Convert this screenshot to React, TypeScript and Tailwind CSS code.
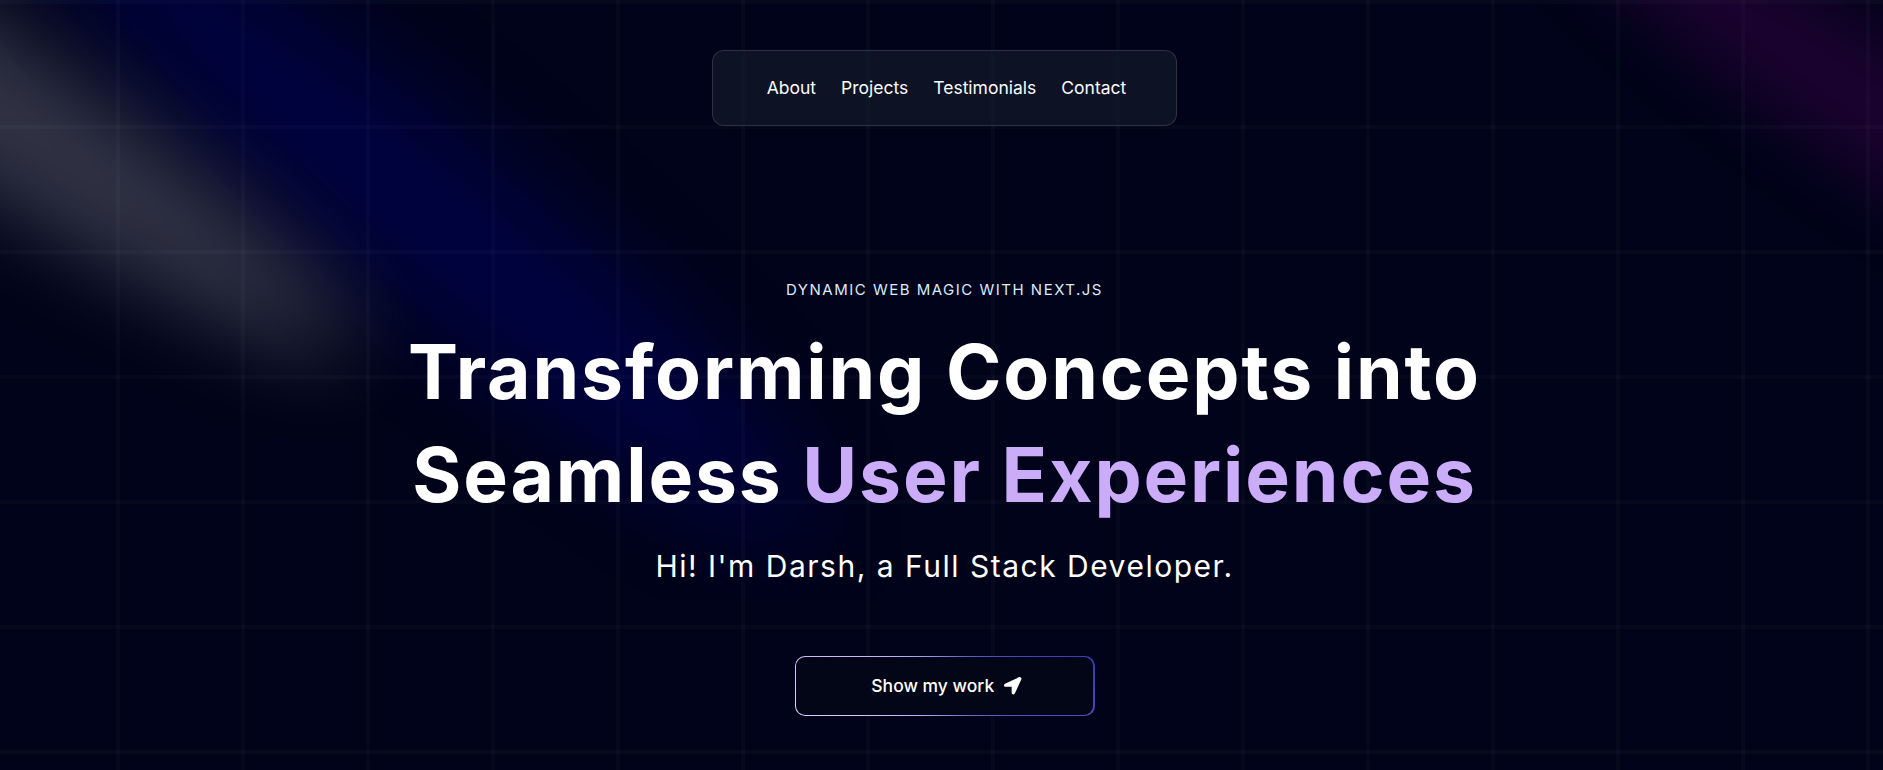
import { FaLocationArrow } from "react-icons/fa";

const links = ["About", "Projects", "Testimonials", "Contact"];

// three blurred, tilted light beams drawn straight in screen pixels
const Spotlights = () => (
  <svg
    className="pointer-events-none absolute inset-0 z-[1] h-full w-full"
    viewBox="0 0 1883 770"
    preserveAspectRatio="none"
    fill="none"
    xmlns="http://www.w3.org/2000/svg"
  >
    <defs>
      <filter id="blur-white" filterUnits="userSpaceOnUse" x="-673" y="-408" width="1130" height="880" colorInterpolationFilters="sRGB">
        <feGaussianBlur stdDeviation="44" />
      </filter>
      <filter id="blur-blue" filterUnits="userSpaceOnUse" x="-10" y="-300" width="1100" height="900" colorInterpolationFilters="sRGB">
        <feGaussianBlur stdDeviation="50" />
      </filter>
      <filter id="blur-purple" filterUnits="userSpaceOnUse" x="1473" y="-196" width="821" height="616" colorInterpolationFilters="sRGB">
        <feGaussianBlur stdDeviation="34" />
      </filter>
    </defs>
    <g filter="url(#blur-white)">
      <ellipse cx="-115" cy="38" rx="565" ry="76" transform="rotate(33.5 -115 38)" fill="white" fillOpacity="0.2" />
    </g>
    <g filter="url(#blur-blue)">
      <ellipse cx="432" cy="216" rx="495" ry="80" transform="rotate(40 432 216)" fill="blue" fillOpacity="0.18" />
    </g>
    <g filter="url(#blur-purple)">
      <ellipse cx="1883" cy="112" rx="417" ry="62" transform="rotate(34.7 1883 112)" fill="purple" fillOpacity="0.21" />
    </g>
  </svg>
);

const MagicButton = () => (
  <button className="relative mt-[70px] inline-flex h-[60px] w-[300px] overflow-hidden rounded-[10px] p-[1.25px] focus:outline-none">
    <span className="absolute inset-[-1000%] bg-[conic-gradient(from_262deg_at_50%_50%,#E2CBFF_0%,#393BB2_50%,#E2CBFF_100%)]" />
    <span className="relative inline-flex h-full w-full cursor-pointer items-center justify-center gap-[10px] rounded-[9px] bg-[#020617] pl-[40px] pr-[36px] text-[17.5px] font-medium text-white">
      Show my work
      <FaLocationArrow />
    </span>
  </button>
);

export default function App() {
  return (
    <main className="relative h-screen w-full overflow-hidden bg-[#000319] text-white [font-family:Inter,sans-serif]">
      <div className="pointer-events-none absolute inset-0 bg-[linear-gradient(to_right,rgba(255,255,255,0.023)_4px,transparent_4px),linear-gradient(to_bottom,rgba(255,255,255,0.023)_4px,transparent_4px)] bg-[size:125px_125px] bg-[position:116px_0px]" />

      <Spotlights />

      <div className="relative z-10 flex flex-col items-center pl-[6px]">
        <nav className="mt-[50px] flex h-[76px] w-[465px] items-center justify-center gap-[25px] rounded-[12px] border border-white/[0.13] bg-[rgba(17,25,40,0.75)] pl-[4px] pt-[1px] text-[17.5px] text-neutral-50 shadow-[0px_2px_3px_-1px_rgba(0,0,0,0.1),0px_1px_0px_0px_rgba(25,28,33,0.02),0px_0px_0px_1px_rgba(25,28,33,0.08)]">
          {links.map((l) => (
            <a key={l} href={`#${l.toLowerCase()}`} className="cursor-pointer">
              {l}
            </a>
          ))}
        </nav>

        <p className="mt-[154px] text-center text-[15px] leading-[20px] tracking-[0.1em] text-blue-100 uppercase">
          Dynamic Web Magic with Next.js
        </p>

        <h1 className="mt-[20px] text-center text-[75px] leading-[103px] font-bold tracking-[0.025em] text-white">
          Transforming Concepts into
          <br />
          Seamless <span className="text-[#CBACF9]">User Experiences</span>
        </h1>

        <p className="mt-[20px] text-center text-[30px] leading-[40px] tracking-[0.05em] text-white">
          Hi! I'm Darsh, a Full Stack Developer.
        </p>

        <a href="#about">
          <MagicButton />
        </a>
      </div>
    </main>
  );
}
